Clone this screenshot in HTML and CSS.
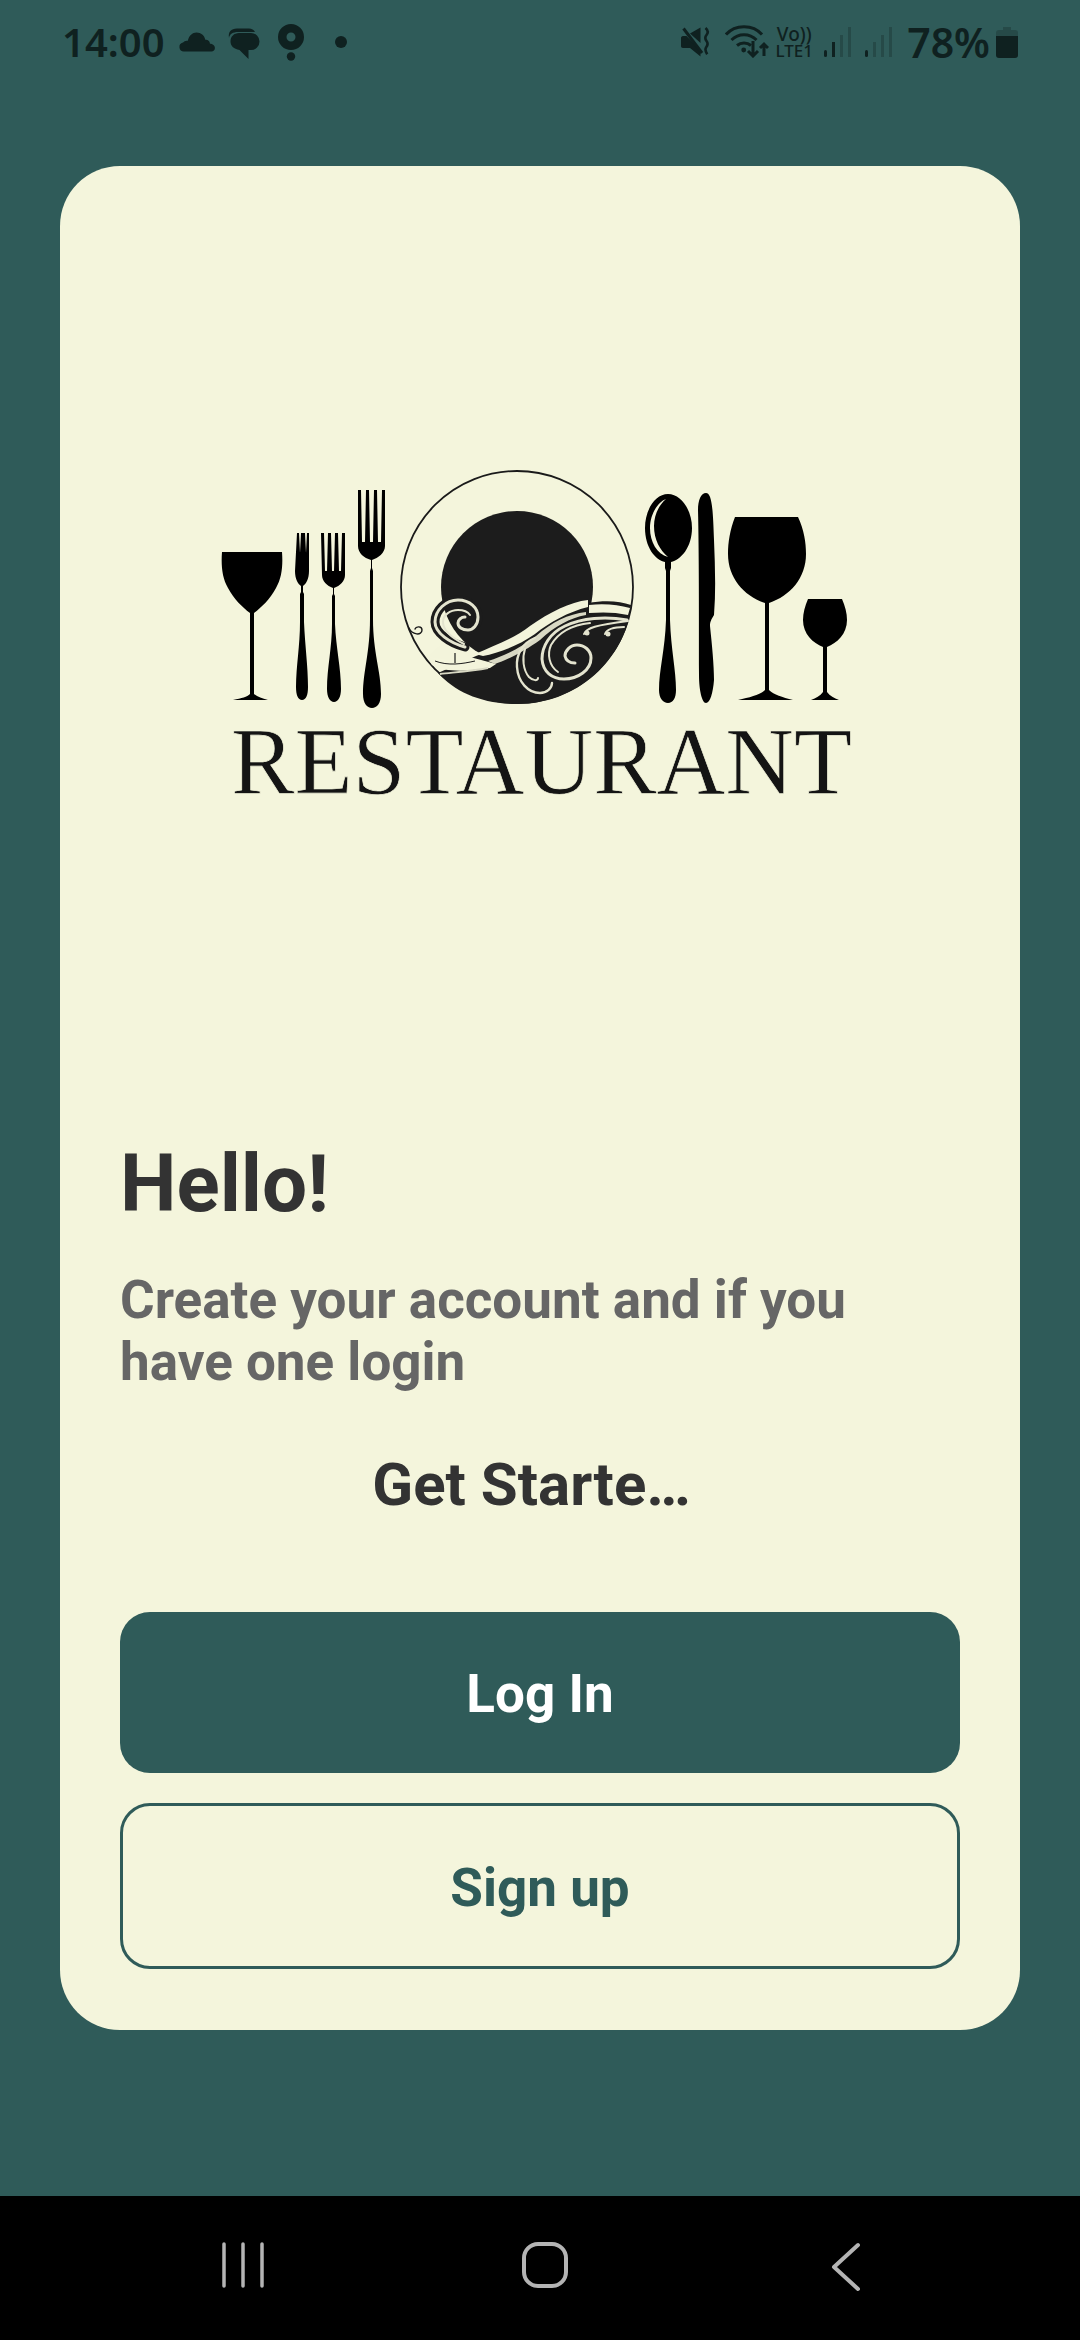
FILE: index.html
```html
<!DOCTYPE html>
<html>
<head>
    <meta charset="utf-8">
    <title>Restaurant</title>
    <meta name="viewport" content="width=device-width, initial-scale=1">
    <link rel="stylesheet" href="styles.css">
</head>
<body>
    <div class="status-bar">
        <div class="status-left">
            <span class="clock">14:00</span>
            <svg class="ic-cloud" width="36" height="20" viewBox="0 0 36 20"><path d="M5 19.500a4.500 4.500 0 0 1-1-8.900c1-1.500 3-2.300 4.800-1.800C10 3.500 13.500 .5 17.500 .5c4.500 0 8 3 8.800 7.300 1-.3 2.400 0 3.300 1 1 1 1.300 2 1.300 2.900 2.700 0 5 1.700 5 4.300 0 2-1.500 3.500-3.500 3.500z"/></svg>
            <svg class="ic-chat" width="32" height="32" viewBox="0 0 32 32"><path d="M1 10C0 4 3 .5 9 .5h12c2.600 0 5 1.200 6 3.500H10C5 4 1.500 6 1 10z"/><path d="M11 5h12a8.500 8.500 0 0 1 0 17h-2.500v9L11.500 22C5.500 21 2.500 17.500 2.500 13.500 2.500 8.500 6 5 11 5z"/></svg>
            <svg class="ic-pin" width="26" height="37" viewBox="0 0 26 37"><path fill-rule="evenodd" d="M13 0a13 13 0 1 1 0 26 13 13 0 0 1 0-26zm0 8.500a4.500 4.500 0 1 0 0 9 4.500 4.500 0 0 0 0-9z"/><circle cx="13" cy="32.500" r="4.200"/></svg>
            <span class="dot"></span>
        </div>
        <div class="status-right">
            <svg class="ic-mute" width="30" height="30" viewBox="0 0 30 30"><path d="M0 11c0-1 .7-2 2-2h3.500l14 14v6.500L9 21H2c-1.300 0-2-1-2-2z"/><path d="M9 6.500 19.500 .5V16z"/><path d="M2.500 1.500 21 26" fill="none" stroke="#0f2120" stroke-width="3"/><path d="M24.500 1c3 2.500 3 4.500 1 7-2 2.500-1.500 4 0 6s1.500 4-.3 6.200c-1.500 2-1.200 3.500 1 7" fill="none" stroke="#0f2120" stroke-width="2.600"/></svg>
            <svg class="ic-wifi" width="44" height="33" viewBox="0 0 44 33" fill="none" stroke="#0f2120" stroke-width="3"><path d="M1 9.500C10-1 28-1 37 9.500"/><path d="M6.500 15c7-7 18-7 25 0"/><path d="M12 20.500c4-3.500 10-3.500 14 0"/><circle cx="18.700" cy="25" r="2.400" fill="#0f2120" stroke="none"/><path d="M28 16v15m-5-5 5 5 5-5"/><path d="M39 31V19m-4 4 4-4 4 4"/></svg>
            <div class="volte"><span class="volte-top">Vo))</span><span class="volte-bottom">LTE1</span></div>
            <svg class="ic-signal" width="28" height="30" viewBox="0 0 28 30"><rect x="0" y="23" width="3" height="7" rx="1.500" fill="#0f2120"/><rect x="8" y="15" width="3" height="15" fill="#0f2120"/><rect x="16" y="8" width="3" height="22" fill="#264a48"/><rect x="24" y="0" width="3" height="30" fill="#264a48"/></svg>
            <svg class="ic-signal ic-signal2" width="28" height="30" viewBox="0 0 28 30"><rect x="0" y="23" width="3" height="7" rx="1.500" fill="#0f2120"/><rect x="8" y="15" width="3" height="15" fill="#264a48"/><rect x="16" y="8" width="3" height="22" fill="#264a48"/><rect x="24" y="0" width="3" height="30" fill="#264a48"/></svg>
            <span class="battery-pct">78%</span>
            <svg class="ic-battery" width="22" height="31" viewBox="0 0 22 31"><path d="M7 0h8v3h4c2 0 3 1 3 3v3H0V6c0-2 1-3 3-3h4z" fill="#264a48"/><path d="M0 9h22v19c0 2-1 3-3 3H3c-2 0-3-1-3-3z" fill="#0f2120"/></svg>
        </div>
    </div>

    <main class="content">
        <div class="card">
            <!-- logo, coords are px inside the 680x370 box -->
            <svg class="logo" width="680" height="370" viewBox="0 0 680 370">
                <!-- wine glass left -->
                <path d="M22 102H82C83 115 82 128 76 138 70 149 62 157 54 163V244C58 247 62 248 68 250H33C42 248 47 247 50 244V163C42 157 34 149 28 138 22 128 21 115 22 102Z"/>
                <!-- small fork -->
                <path d="M97 83h2l1 20 1-20h4l1 20 1-20h2l0 38c0 8-3 13-6 15v6l1 2v28c1 24 4 44 4 65 0 8-2 13-6 13s-6-5-6-13c0-21 4-41 4-65v-28l1-2v-6c-3-2-6-7-6-15z"/>
                <!-- middle fork -->
                <path d="M121 83h3l1 38h2l1-38h3l1 38h2l1-38h3l1 38h2l1-38h3v42c0 6-5 11-11 13v6l1 2v28c1 24 6 44 6 65 0 8-3 13-7 13s-7-5-7-13c0-21 5-41 5-65v-28l1-2v-6c-6-2-11-7-11-13z"/>
                <!-- big fork -->
                <path d="M158 40h3l1 52h3l1-52h3l1 52h3l1-52h3l1 52h3l1-52h3v56c0 7-7 12-13 14v8l1 3v48c0 34 8 52 8 75 0 9-4 14-9 14s-9-5-9-14c0-23 7-41 7-75v-48l1-3v-8c-7-2-13-7-13-14z"/>

                <!-- plate -->
                <circle cx="317" cy="137" r="116" fill="none" stroke="#1a1a1a" stroke-width="1.800"/>
                <circle cx="317" cy="137" r="76" fill="#1c1c1c"/>
                <path d="M238 223 276 206C300 198 345 165 388 153 405 150 420 151 431 155 428 200 385 254 317 254 282 254 255 242 238 223Z" fill="#1c1c1c"/>
                <!-- cream gap under the circle, left of the swoosh -->
                <path d="M241 170 240 196 228 207 262 212 276 204 262 196Z" fill="#f3f4db"/>
                <!-- swoosh bands -->
                <path d="M275 204C295 195 315 188 330 176 350 162 370 152 388 150L388 157C368 162 350 172 335 184 318 196 298 203 283 206Z" fill="#f3f4db"/>
                <path d="M288 211C305 206 322 197 336 186 352 172 368 164 386 162L386 165C370 168 355 176 340 190 325 201 305 211 295 214Z" fill="#d9d9c4"/>
                <path d="M389 155C405 153 418 155 430 158L428 165C415 162 402 162 389 163Z" fill="#f3f4db"/>
                <path d="M225 204C238 213 252 215 270 207L296 214 290 218C270 221 245 223 232 215Z" fill="#f3f4db"/>
                <path d="M240 224C258 222 272 221 288 218" fill="none" stroke="#d9d9c4" stroke-width="1.800"/>
                <path d="M255 203V213" stroke="#1a1a1a" stroke-width="1.200" fill="none"/>
                <path d="M235 211C248 216 262 214 275 211" stroke="#1a1a1a" stroke-width="1" fill="none"/>
                <!-- swirl left -->
                <g fill="none" stroke-linecap="round">
                    <path d="M265 197C250 193 235 183 235 172 235 160 246 150 258 150 270 150 278 158 278 167 278 175 273 180 268 180 262 180 258 177 258 173 258 170 261 167 265 167" stroke="#1c1c1c" stroke-width="9"/>
                    <path d="M265 197C250 193 235 183 235 172 235 160 246 150 258 150 270 150 278 158 278 167 278 175 273 180 268 180 262 180 258 177 258 173 258 170 261 167 265 167" stroke="#e4e4cf" stroke-width="3"/>
                    <path d="M264 194C252 188 243 180 243 172 243 165 250 160 258 160 264 160 268 162 270 165" stroke="#e4e4cf" stroke-width="2"/>
                    <!-- swirl right -->
                    <path d="M427 170C405 166 382 168 365 176 350 183 342 196 342 209 343 222 352 229 364 229 378 229 391 220 391 208 391 200 384 195 377 195 370 195 365 201 365 206 366 211 370 213 375 213" stroke="#e4e4cf" stroke-width="3"/>
                    <path d="M390 173C372 175 358 183 351 195 347 204 349 216 358 222" stroke="#e4e4cf" stroke-width="2"/>
                    <!-- swirl bottom -->
                    <path d="M335 188C322 193 316 205 317 217 318 232 328 243 340 243 347 243 352 238 352 233" stroke="#e4e4cf" stroke-width="2.400"/>
                    <path d="M325 199C322 208 323 220 329 227 333 231 338 231 338 228" stroke="#e4e4cf" stroke-width="2"/>
                    <!-- small curls -->
                    <path d="M384 184C386 178 396 175 428 171" stroke="#e4e4cf" stroke-width="2"/>
                    <path d="M405 184C407 179 414 177 424 177" stroke="#e4e4cf" stroke-width="2"/>
                    <circle cx="387" cy="183" r="2.500" fill="#e4e4cf"/>
                    <circle cx="408" cy="184" r="2.500" fill="#e4e4cf"/>
                    <path d="M209 178C212 185 222 186 222 180 222 176 216 176 215 179" stroke="#1a1a1a" stroke-width="1.400"/>
                </g>

                <!-- spoon -->
                <path fill-rule="evenodd" d="M468 44C481 44 492 60 492 78 492 97 481 110 471 112V118L470 121V170C471 200 476 220 476 240 476 248 473 253 468 253S459 248 459 240C459 220 465 200 466 170V121L465 118V112C455 110 445 97 445 78 445 60 455 44 468 44ZM466 49C458 52 450 64 450 78 450 92 457 104 468 107 460 100 454 90 454 76 454 65 459 55 466 49Z"/>
                <!-- knife -->
                <path d="M506 43C512 43 513 60 514 90 515 115 516 140 514 165 511 170 510 172 510 176 512 195 514 215 514 230 513 243 510 253 506 253 502 253 499 240 499 225 499 170 499 100 498 60 498 50 501 43 506 43Z"/>
                <!-- wine glass right -->
                <path d="M535 67H598C604 80 606 92 606 104 606 128 590 146 569 153V240C574 245 582 247 593 250H538C550 247 560 245 565 240V153C544 146 528 128 528 104 528 92 530 80 535 67Z"/>
                <!-- small wine glass -->
                <path d="M608 149H642C645 156 647 163 647 170 647 184 637 193 627 197V242C630 246 634 248 639 250H611C616 248 620 246 623 242V197C613 193 603 184 603 170 603 163 605 156 608 149Z"/>

                <text class="logo-text" x="31" y="344" textLength="621" lengthAdjust="spacingAndGlyphs">RESTAURANT</text>
            </svg>

            <h1 class="hello">Hello!</h1>
            <p class="subtitle">Create your account and if you have one login</p>
            <p class="get-started">Get Starte…</p>
            <button class="btn btn-login">Log In</button>
            <button class="btn btn-signup">Sign up</button>
        </div>
    </main>

    <div class="nav-bar">
        <svg width="42" height="46" viewBox="0 0 42 46" fill="none" stroke="#b4b4b4" stroke-width="3.500" stroke-linecap="round"><path d="M2 2v42M21 2v42M40 2v42"/></svg>
        <svg class="ic-home" width="46" height="46" viewBox="0 0 46 46" fill="none" stroke="#b4b4b4" stroke-width="4"><rect x="2" y="2" width="42" height="42" rx="14"/></svg>
        <svg width="30" height="50" viewBox="0 0 30 50" fill="none" stroke="#b4b4b4" stroke-width="4" stroke-linecap="round" stroke-linejoin="round"><path d="M27 3 3 25l24 22"/></svg>
    </div>
</body>
</html>
```

FILE: styles.css
```css
* {
    box-sizing: border-box;
}

html, body {
    margin: 0;
    padding: 0;
}

body {
    width: 1080px;
    height: 2340px;
    background-color: #2f5b59;
    font-family: Roboto, "Noto Sans", sans-serif;
    display: flex;
    flex-direction: column;
    overflow: hidden;
}

.status-bar {
    height: 166px;
    flex-shrink: 0;
    padding: 24px 62px 0 62px;
    display: flex;
    justify-content: space-between;
    align-items: flex-start;
    color: #0f2120;
    fill: #0f2120;
}

.status-left,
.status-right {
    display: flex;
    align-items: flex-start;
}

.clock {
    font-family: "Noto Sans", Roboto, sans-serif;
    font-size: 40px;
    font-weight: 600;
    line-height: 36px;
}

.ic-cloud {
    margin: 8px 0 0 14px;
}

.ic-chat {
    margin: 4px 0 0 13px;
}

.ic-pin {
    margin: 0 0 0 18px;
}

.dot {
    width: 12px;
    height: 12px;
    border-radius: 50%;
    background-color: #0f2120;
    margin: 12px 0 0 31px;
}

.ic-mute {
    margin-top: 3px;
}

.ic-wifi {
    margin: 1px 0 0 14px;
}

.volte {
    margin: 1px 0 0 4px;
    width: 42px;
    display: flex;
    flex-direction: column;
    align-items: center;
    font-family: "Noto Sans", Roboto, sans-serif;
    font-weight: 500;
}

.volte-top {
    font-size: 19px;
    line-height: 18px;
}

.volte-bottom {
    font-size: 17px;
    line-height: 16px;
}

.ic-signal {
    margin: 3px 0 0 9px;
}

.ic-signal2 {
    margin-left: 13px;
}

.battery-pct {
    font-family: "Noto Sans", Roboto, sans-serif;
    font-size: 41px;
    font-weight: 600;
    line-height: 36px;
    margin-left: 14px;
}

.ic-battery {
    margin: 3px 0 0 6px;
}

.content {
    flex: 1;
    padding: 0 60px;
}

.card {
    height: 1864px;
    background-color: #f4f5dc;
    border-radius: 60px;
    padding: 284px 60px 0;
}

.logo {
    display: block;
    margin: 0 0 0 80px;
    fill: #000;
}

.logo-text {
    font-family: "Liberation Serif", serif;
    font-size: 95px;
    fill: #141414;
    stroke: #f3f4db;
    stroke-width: 0.7px;
}

.hello {
    margin: 321px 0 0;
    font-size: 80px;
    font-weight: 700;
    line-height: 86px;
    color: #333;
}

.subtitle {
    margin: 42px 0 0;
    padding-right: 60px;
    font-size: 53px;
    font-weight: 700;
    line-height: 62px;
    color: #666;
}

.get-started {
    margin: 59px 0 0;
    padding-right: 17px;
    text-align: center;
    font-size: 60px;
    font-weight: 700;
    line-height: 66px;
    color: #333;
}

.btn {
    display: block;
    width: 100%;
    padding-top: 4px;
    font-family: inherit;
    font-size: 53px;
    font-weight: 700;
    border-radius: 30px;
}

.btn-login {
    height: 161px;
    margin-top: 94px;
    background-color: #2f5b59;
    border: none;
    color: #fff;
}

.btn-signup {
    height: 166px;
    margin-top: 30px;
    background-color: transparent;
    border: 3px solid #2f5b59;
    color: #2f5b59;
}

.nav-bar {
    height: 144px;
    flex-shrink: 0;
    background-color: #000;
    padding: 46px 219px 0 222px;
    display: flex;
    justify-content: space-between;
    align-items: flex-start;
}

.ic-home {
    margin-right: 6px;
}
```
